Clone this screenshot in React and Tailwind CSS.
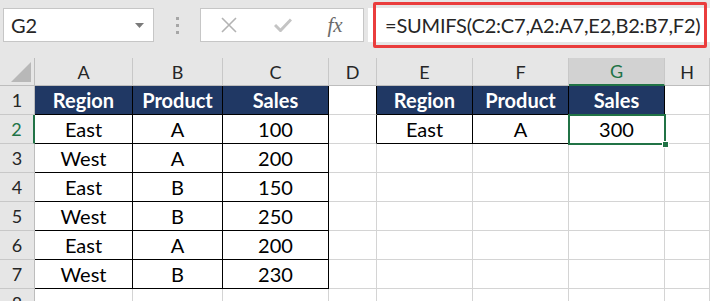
import React from "react";

const cols = ["A", "B", "C", "D", "E", "F", "G", "H"];
const data = [
  ["East", "A", "100"],
  ["West", "A", "200"],
  ["East", "B", "150"],
  ["West", "B", "250"],
  ["East", "A", "200"],
  ["West", "B", "230"],
];

function Cell({ children, className = "" }) {
  return (
    <div
      className={
        "flex items-center justify-center border-r border-b text-[20px] leading-none " +
        className
      }
    >
      {children}
    </div>
  );
}

export default function App() {
  const rows = [];
  for (let r = 1; r <= 8; r++) {
    const isSel = r === 2;
    rows.push(
      <div
        key={"rh" + r}
        className={
          "flex items-center justify-center bg-[#e6e6e6] text-[18px] leading-none border-b border-[#c8c8c8] " +
          (isSel
            ? "text-[#217346] border-r-2 border-r-[#217346]"
            : "text-[#262626] border-r border-r-[#bdbdbd]")
        }
      >
        {r}
      </div>
    );
    // A-C
    for (let c = 0; c < 3; c++) {
      if (r === 1) {
        rows.push(
          <Cell key={r + "-" + c} className="bg-[#203864] text-white font-bold border-black">
            {["Region", "Product", "Sales"][c]}
          </Cell>
        );
      } else if (r <= 7) {
        rows.push(
          <Cell key={r + "-" + c} className="bg-white text-black border-black">
            {data[r - 2][c]}
          </Cell>
        );
      } else {
        rows.push(<Cell key={r + "-" + c} className="border-[#d4d4d4]" />);
      }
    }
    // D
    rows.push(
      <Cell
        key={r + "-D"}
        className={
          "border-b-[#d4d4d4] " + (r <= 2 ? "border-r-black" : "border-r-[#d4d4d4]")
        }
      />
    );
    // E-G
    for (let c = 0; c < 3; c++) {
      if (r === 1) {
        rows.push(
          <Cell
            key={r + "-e" + c}
            className={
              "bg-[#203864] text-white font-bold border-r-black " +
              (c === 2 ? "border-b-[#217346]" : "border-b-black")
            }
          >
            {["Region", "Product", "Sales"][c]}
          </Cell>
        );
      } else if (r === 2) {
        rows.push(
          <Cell key={r + "-e" + c} className="bg-white text-black border-black">
            {["East", "A", "300"][c]}
          </Cell>
        );
      } else {
        rows.push(<Cell key={r + "-e" + c} className="border-[#d4d4d4]" />);
      }
    }
    // H
    rows.push(<Cell key={r + "-H"} className="border-[#d4d4d4]" />);
  }

  return (
    <div
      className="relative w-[710px] h-[301px] overflow-hidden bg-white"
      style={{ fontFamily: "Lato, 'Open Sans', sans-serif" }}
    >
      {/* toolbar */}
      <div className="flex h-[58px] bg-[#e6e6e6] pt-[8px] pb-[16px] pl-[3px]">
        <div className="flex items-center justify-between w-[151px] h-[34px] bg-white border border-[#c6c6c6] pl-[7px] pr-[9px]">
          <span className="text-[20px] text-[#262626] leading-none">G2</span>
          <svg width="9" height="5" viewBox="0 0 9 5">
            <path d="M0 0 L9 0 L4.5 5 Z" fill="#7a7a7a" />
          </svg>
        </div>
        <div className="flex flex-col items-center justify-center gap-[4px] w-[46px]">
          <div className="w-[3px] h-[3px] bg-[#a6a6a6]" />
          <div className="w-[3px] h-[3px] bg-[#a6a6a6]" />
          <div className="w-[3px] h-[3px] bg-[#a6a6a6]" />
        </div>
        <div className="flex items-center w-[164px] h-[34px] bg-white border border-[#c6c6c6]">
          <div className="w-[56px] flex justify-center">
            <svg width="16" height="16" viewBox="0 0 16 16">
              <path d="M1 1 L15 15 M15 1 L1 15" stroke="#b3b3b3" strokeWidth="1.6" fill="none" />
            </svg>
          </div>
          <div className="w-[52px] flex justify-center">
            <svg width="18" height="14" viewBox="0 0 18 14">
              <path d="M1 7 L6.5 12.5 L17 1.5" stroke="#c4c4c4" strokeWidth="3" fill="none" />
            </svg>
          </div>
          <div className="w-[52px] flex justify-center">
            <span
              className="italic text-[21px] leading-none text-[#6b6b6b]"
              style={{ fontFamily: "'Liberation Serif', serif" }}
            >
              fx
            </span>
          </div>
        </div>
        <div className="ml-[4px] flex-1 h-[34px] bg-white flex items-center pl-[17px]">
          <span className="text-[20px] text-[#262626] leading-none tracking-[-0.2px]">
            =SUMIFS(C2:C7,A2:A7,E2,B2:B7,F2)
          </span>
        </div>
      </div>
      {/* red annotation */}
      <div className="absolute left-[373px] top-[2px] w-[334px] h-[46px] border-[3px] border-[#ea3d3d] rounded-[2px]" />

      {/* grid */}
      <div className="grid grid-cols-[35px_98px_90px_106px_48px_96px_96px_96px_1fr] grid-rows-[28px_repeat(8,29px)]">
        <div className="relative bg-[#e6e6e6] border-r border-b border-[#bdbdbd]">
          <svg className="absolute right-[3px] bottom-[3px]" width="20" height="20" viewBox="0 0 20 20">
            <path d="M20 0 L20 20 L0 20 Z" fill="#b8b8b8" />
          </svg>
        </div>
        {cols.map((c) => (
          <div
            key={c}
            className={
              "flex items-center justify-center text-[18px] leading-none border-r border-r-[#c8c8c8] " +
              (c === "G"
                ? "bg-[#d2d2d2] text-[#217346] border-b-2 border-b-[#217346]"
                : "bg-[#e6e6e6] text-[#262626] border-b border-b-[#bdbdbd]")
            }
          >
            {c}
          </div>
        ))}
        {rows}
      </div>

      {/* selection */}
      <div className="absolute left-[568px] top-[114px] w-[98px] h-[31px] border-2 border-[#217346]" />
      <div className="absolute left-[662px] top-[141px] w-[7px] h-[7px] bg-[#217346] border border-white" />
    </div>
  );
}
